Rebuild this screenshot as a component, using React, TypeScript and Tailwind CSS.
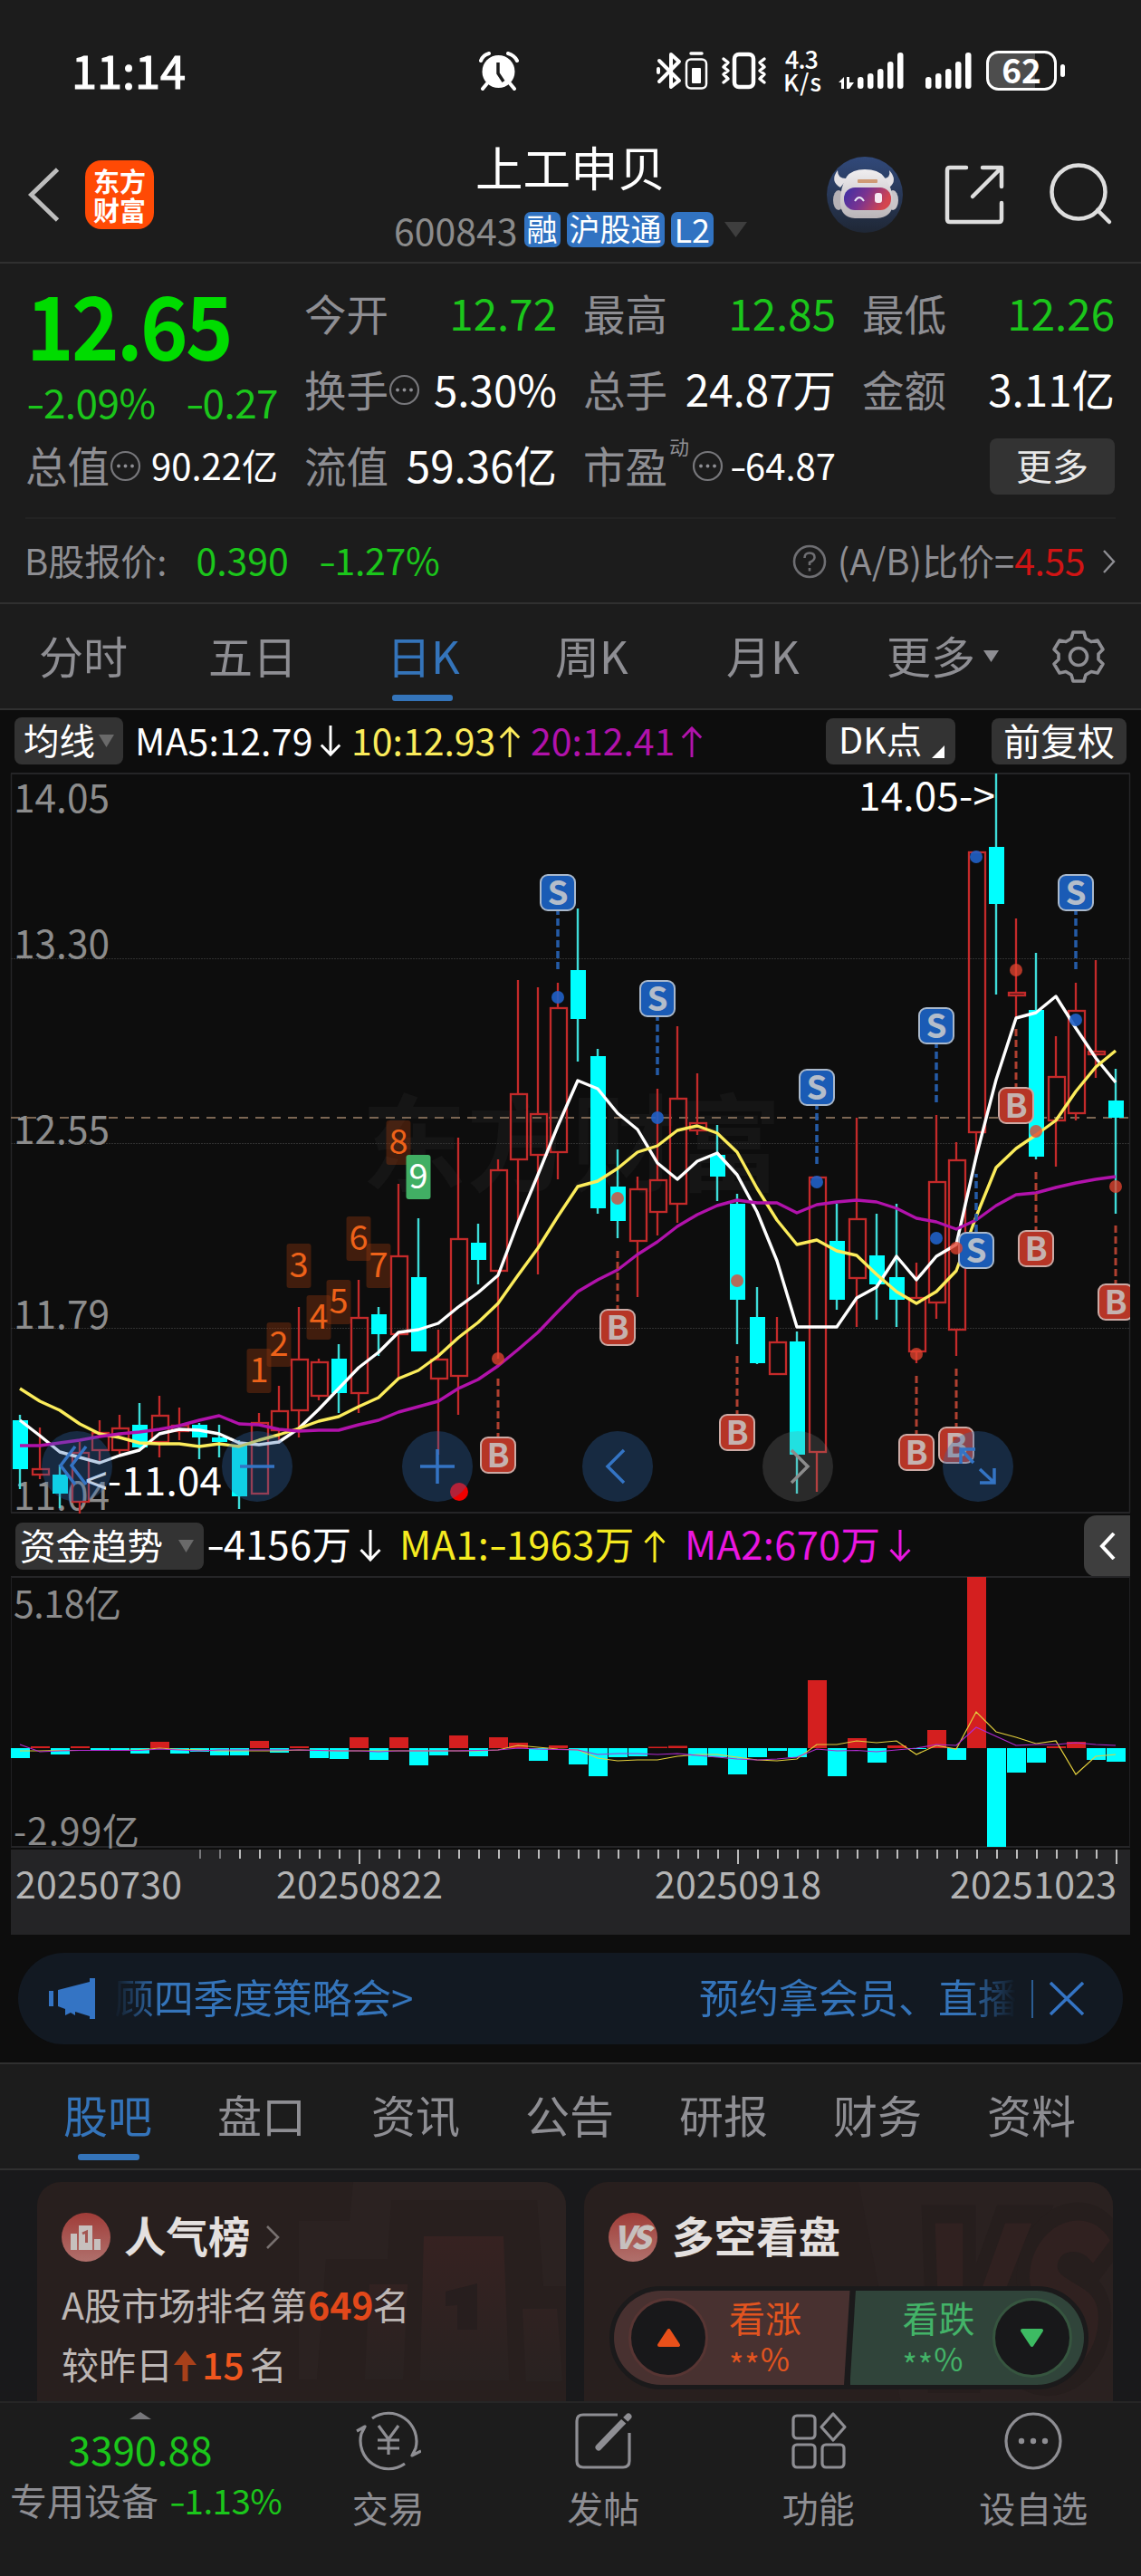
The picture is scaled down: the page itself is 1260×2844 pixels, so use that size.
import React from 'react';

type Candle = [kind: 'u' | 'd', high: number, top: number, bottom: number, low: number];

const X0 = 22;
const STEP = 22;
const cx = (i: number) => X0 + STEP * i;

const candles: Candle[] = [
  ['d', 1562, 1568, 1622, 1644], ['u', 1576, 1621, 1628, 1633], ['d', 1617, 1628, 1649, 1665], ['u', 1592, 1603, 1658, 1671],
  ['u', 1568, 1581, 1601, 1615], ['u', 1562, 1576, 1601, 1605], ['d', 1549, 1573, 1598, 1599], ['u', 1541, 1562, 1592, 1609],
  ['u', 1554, 1573, 1580, 1590], ['d', 1571, 1573, 1587, 1611], ['d', 1573, 1587, 1592, 1609], ['d', 1590, 1595, 1652, 1666],
  ['u', 1560, 1570, 1649, 1649], ['u', 1530, 1557, 1579, 1594], ['u', 1443, 1500, 1557, 1587], ['u', 1500, 1503, 1541, 1546],
  ['d', 1484, 1500, 1538, 1560], ['u', 1413, 1454, 1538, 1560], ['d', 1443, 1451, 1473, 1497], ['u', 1307, 1386, 1473, 1522],
  ['d', 1345, 1410, 1492, 1492], ['u', 1468, 1500, 1522, 1606], ['u', 1256, 1367, 1519, 1562], ['d', 1351, 1372, 1391, 1418],
  ['u', 1280, 1291, 1403, 1500], ['u', 1082, 1207, 1280, 1348], ['u', 1090, 1229, 1275, 1407], ['u', 1085, 1112, 1272, 1302],
  ['d', 1003, 1071, 1125, 1172], ['d', 1158, 1166, 1334, 1340], ['d', 1269, 1310, 1348, 1367], ['u', 1299, 1312, 1370, 1432],
  ['u', 1202, 1302, 1338, 1364], ['u', 1133, 1212, 1329, 1350], ['u', 1185, 1239, 1248, 1253], ['d', 1242, 1275, 1299, 1326],
  ['d', 1318, 1329, 1435, 1484], ['d', 1421, 1454, 1505, 1506], ['u', 1454, 1481, 1517, 1517], ['d', 1470, 1481, 1606, 1649],
  ['u', 1299, 1299, 1603, 1647], ['d', 1329, 1370, 1435, 1446], ['u', 1234, 1345, 1411, 1465], ['d', 1340, 1386, 1418, 1457],
  ['d', 1329, 1410, 1435, 1465], ['u', 1394, 1432, 1492, 1505], ['u', 1231, 1304, 1438, 1456], ['u', 1261, 1280, 1468, 1497],
  ['u', 940, 940, 1250, 1280], ['d', 854, 935, 998, 1098], ['u', 1014, 1095, 1099, 1123], ['d', 1052, 1115, 1277, 1280],
  ['u', 1144, 1188, 1237, 1288], ['u', 1085, 1115, 1229, 1237], ['u', 1060, 1160, 1164, 1190], ['d', 1180, 1215, 1234, 1340],
];

const ma5 = [1568, 1585, 1603, 1609, 1615, 1607, 1601, 1583, 1578, 1579, 1583, 1593, 1595, 1592, 1577, 1556, 1533, 1510, 1493, 1471, 1468, 1461, 1443, 1427, 1408, 1350, 1297, 1243, 1193, 1202, 1229, 1247, 1284, 1302, 1282, 1273, 1297, 1338, 1392, 1465, 1465, 1465, 1433, 1421, 1387, 1413, 1387, 1374, 1277, 1192, 1124, 1118, 1100, 1135, 1168, 1195];
const ma10 = [1533, 1547, 1557, 1572, 1583, 1587, 1593, 1594, 1594, 1597, 1594, 1597, 1590, 1584, 1577, 1569, 1564, 1553, 1543, 1522, 1513, 1497, 1477, 1460, 1439, 1408, 1378, 1343, 1310, 1304, 1290, 1272, 1265, 1248, 1243, 1251, 1272, 1312, 1347, 1374, 1369, 1381, 1386, 1407, 1426, 1439, 1426, 1403, 1343, 1289, 1268, 1253, 1237, 1205, 1178, 1160];
const ma20 = [1596, 1596, 1593, 1590, 1586, 1583, 1581, 1578, 1574, 1568, 1563, 1572, 1573, 1578, 1580, 1579, 1579, 1573, 1568, 1559, 1553, 1547, 1533, 1523, 1508, 1490, 1471, 1448, 1426, 1413, 1402, 1385, 1371, 1354, 1341, 1331, 1325, 1328, 1328, 1339, 1330, 1327, 1325, 1327, 1334, 1345, 1349, 1357, 1347, 1331, 1319, 1317, 1311, 1306, 1302, 1299];

const flow = [11, -2, 7, -2, 2, 2, 6, -7, 6, 4, 8, 8, -8, 5, -2, 11, 12, -12, 13, -12, 19, 8, -14, 9, -12, -6, 14, -3, 18, 31, 10, 9, -1.5, -2.5, 19, 10, 29, 10, 3, 10, -75, 31, -11, 16, -3, 1, -20, 13, -189, 109, 27, 16, -2, -7, 13, 15];
const flowA = [3, 3, 2.5, 2.5, 2.5, 2.5, 2, 0, 1.5, 2, 3, 3, 3, 3, 2, 2.5, 3, 3, 3, 3, 3, 3, 3, 3, 2, -3, -1, 1, 2, 11, 14, 13, 13, 9, 7, 7, 10, 13, 14, 12, -4, -4, -8, -6, -8, 7, -3, 1, -40, -18, -12, -5, -8, 29, 9, 7];
const flowB = [-4, 4, 3, 2.5, 2.5, 2.5, 2.5, 1, 2, 3, 2, 2, 2, 2, 2, 2.5, 3, 3, 4, 3, 3, 3, 3, 2.5, 2, 0, 1, 1.5, 2, 7, 6, 6, 7, 6, 8, 10, 12, 13, 12, 10, 1, 3, 2.5, 4, 2, 0, -4, -3, -23, -13, -3, -4, -4, -6, -4, -3];

const pts = (ys: number[], base = 0) => ys.map((y, i) => `${cx(i)},${base + y}`).join(' ');

const sells = [
  { i: 27, y: 965, d: [1006, 1070], dot: 1101 },
  { i: 32, y: 1082, d: [1123, 1187], dot: 1234 },
  { i: 40, y: 1180, d: [1221, 1285], dot: 1305 },
  { i: 46, y: 1112, d: [1153, 1217], dot: 1367 },
  { i: 48, y: 1360, d: [1296, 1360], dot: 946 },
  { i: 53, y: 965, d: [1006, 1070], dot: 1126 },
];
const buys = [
  { i: 24, y: 1586, dot: 1500 }, { i: 30, y: 1445, dot: 1323 }, { i: 36, y: 1561, dot: 1414 }, { i: 45, y: 1583, dot: 1495 },
  { i: 47, y: 1575, dot: 1378 }, { i: 50, y: 1200, dot: 1071 }, { i: 51, y: 1358, dot: 1249 }, { i: 55, y: 1417, dot: 1310 },
];
const counts = [1489, 1460, 1373, 1430, 1413, 1343, 1373, 1237, 1275];

/* Number text whose leading minus sign is drawn as a wide dash. */
function Num({ children }: { children: string }) {
  const at = children.indexOf('-');
  if (at < 0) return <>{children}</>;
  return (
    <>
      {children.slice(0, at)}
      <span className="inline-block w-[0.43em] origin-left scale-x-[1.35]">-</span>
      {children.slice(at + 1)}
    </>
  );
}

function Mark({ i, y, label }: { i: number; y: number; label: 'S' | 'B' }) {
  const sell = label === 'S';
  return (
    <g>
      <rect x={cx(i) - 19} y={y + 1} width={38} height={39} rx={8} fill={sell ? '#1a5bb5' : '#b63526'} stroke={sell ? '#a9b8cb' : '#cbaaa5'} strokeWidth={2} />
      <text x={cx(i)} y={y + 34} textAnchor="middle" fontSize={37} fontWeight={700} fill={sell ? '#b4bdca' : '#c5b2af'}>{label}</text>
    </g>
  );
}

function CandleChart() {
  return (
    <svg className="block h-[825px] w-full" viewBox="0 850 1260 825" fontFamily='"Noto Sans CJK SC", sans-serif'>
      <clipPath id="plot"><rect x={12} y={850} width={1236} height={825} /></clipPath>
      <text x={399} y={1306} fontSize={116} fontWeight={700} fill="#151515">东方财富</text>
      <g fill="none" stroke="#252527" strokeWidth={2}>
        <path d="M12 854H1248M12 1670H1248" />
        <path d="M12.5 854V1670M1247.5 854V1670" strokeWidth={1.5} />
        <path d="M12 1058.5H1248M12 1262.5H1248M12 1466.5H1248" stroke="#303030" strokeWidth={1} strokeDasharray="2 1" />
      </g>
      <path d="M12 1234H1248" stroke="#7b6653" strokeWidth={2} strokeDasharray="10 8" />
      <g fontSize={44} fill="#8c8c8c">
        <text x={15} y={897} textLength={106} lengthAdjust="spacingAndGlyphs">14.05</text>
        <text x={15} y={1058} textLength={106} lengthAdjust="spacingAndGlyphs">13.30</text>
        <text x={15} y={1263} textLength={106} lengthAdjust="spacingAndGlyphs">12.55</text>
        <text x={15} y={1467} textLength={106} lengthAdjust="spacingAndGlyphs">11.79</text>
        <text x={15} y={1667} textLength={106} lengthAdjust="spacingAndGlyphs">11.04</text>
      </g>
      <g clipPath="url(#plot)">
        {counts.map((y, n) => {
          const last = n === 8;
          return (
            <g key={n}>
              <rect x={cx(12 + n) - 13.5} y={y} width={27} height={49} rx={3} fill={last ? '#41af64' : 'rgba(150,56,14,0.38)'} />
              <text x={cx(12 + n)} y={y + 37} textAnchor="middle" fontSize={38} fill={last ? '#fff' : '#ee6219'}>{n + 1}</text>
            </g>
          );
        })}
        {candles.map(([k, h, t, b, l], i) =>
          k === 'd' ? (
            <g key={i}>
              <path d={`M${cx(i)} ${h}V${l}`} stroke="#3edcd8" strokeWidth={2.4} />
              <rect x={cx(i) - 8} y={t} width={17} height={b - t} fill="#00ffff" />
            </g>
          ) : (
            <g key={i} fill="none" stroke="#c42a2a" strokeWidth={2.3}>
              <path d={`M${cx(i)} ${h}V${t}M${cx(i)} ${b}V${l}`} />
              <rect x={cx(i) - 8} y={t + 1} width={18} height={Math.max(b - t - 1, 2)} />
            </g>
          ),
        )}
        <g fill="none" strokeWidth={3.4} strokeLinejoin="round">
          <polyline points={pts(ma5)} stroke="#ffffff" />
          <polyline points={pts(ma10)} stroke="#fbec5b" />
          <polyline points={pts(ma20)} stroke="#b112ab" />
        </g>
        {sells.map((s) => (
          <g key={s.i}>
            <path d={`M${cx(s.i)} ${s.d[0]}V${s.d[1]}`} stroke="#255ba6" strokeWidth={3.5} strokeDasharray="8 4" strokeDashoffset={4} />
            <circle cx={cx(s.i)} cy={s.dot} r={7} fill="#2060c8" fillOpacity={0.9} />
            <Mark i={s.i} y={s.y} label="S" />
          </g>
        ))}
        {buys.map((s) => (
          <g key={s.i}>
            <path d={`M${cx(s.i)} ${s.y - 64}V${s.y}`} stroke="#b04030" strokeWidth={3} strokeDasharray="8 4" />
            <circle cx={cx(s.i)} cy={s.dot} r={7} fill="#e24430" fillOpacity={0.78} />
            <Mark i={s.i} y={s.y} label="B" />
          </g>
        ))}
        <circle cx={507} cy={1647} r={10} fill="#f00000" />
      </g>
      <g fontSize={44} fill="#fff">
        <text x={948} y={895} textLength={151}>14.05-&gt;</text>
        <text x={94} y={1651} textLength={151}>&lt;-11.04</text>
      </g>
    </svg>
  );
}

const toolIcons = [
  'M37 17L21 38L37 59M49 17L33 38L49 59',
  'M20 39H58',
  'M20 39H58M39 20V58',
  'M46 21L28 39L46 57',
  'M32 21L50 39L32 57',
  'M20 36V20H36M21 21L34 35M41 42L57 57M57 41V57H41',
];

function FlowChart() {
  return (
    <svg className="block h-[398px] w-full" viewBox="0 1738 1260 398" fontFamily='"Noto Sans CJK SC", sans-serif'>
      <path d="M12 1741H1248M12 2039H1248" stroke="#252527" strokeWidth={2} />
      <path d="M12.5 1741V2039M1247.5 1741V2039" stroke="#202022" />
      <text x={15} y={1786} fontSize={41} fill="#8a8a8a" textLength={119}>5.18亿</text>
      <text x={15} y={2037} fontSize={41} fill="#8a8a8a" textLength={139}>-2.99亿</text>
      {flow.map((v, i) => (
        <rect key={i} x={cx(i) - 10} y={v < 0 ? 1930 + v : 1930} width={21} height={Math.abs(v)} fill={v < 0 ? '#d41f1f' : '#00ffff'} />
      ))}
      <polyline points={pts(flowA, 1930)} fill="none" stroke="#e3cf3c" strokeWidth={1.2} />
      <polyline points={pts(flowB, 1930)} fill="none" stroke="#b02bd0" strokeWidth={1.2} />
      <rect x={12} y={2042} width={1236} height={94} fill="#242426" />
      {candles.map((_, i) =>
        i < 9 ? null : (
          <path key={i} d={`M${cx(i) + 1} 2042V${i === 17 || i === 36 || i === 55 ? 2058 : 2052}`} stroke={i < 11 ? '#77777a' : '#bcbcbc'} strokeWidth={2} />
        ),
      )}
      <g fontSize={41} fill="#b4b4b4">
        <text x={17} y={2096} textLength={184}>20250730</text>
        <text x={305} y={2096} textLength={184}>20250822</text>
        <text x={723} y={2096} textLength={184}>20250918</text>
        <text x={1049} y={2096} textLength={184}>20251023</text>
      </g>
    </svg>
  );
}

function StatusBar() {
  const bars = [85, 81, 76, 68, 58];
  return (
    <div className="flex h-[150px] items-start text-white">
      <div className="ml-[79px] mt-[40px] w-[445px] text-[50.5px] leading-[72px] [-webkit-text-stroke:1.2px_#fff]">11:14</div>
      <svg className="mt-[56px] h-[44px] w-[52px]" viewBox="524 56 52 44">
        <circle cx={550.5} cy={79} r={18} fill="#fff" />
        <path d="M531 67Q533 61 540 59M561 59Q568 61 571 67M538 92L533 98M563 92L568 98" stroke="#fff" strokeWidth={4} fill="none" strokeLinecap="round" />
        <path d="M550 69V81L556 90" stroke="#1c1c1c" strokeWidth={3.5} fill="none" />
      </svg>
      <svg className="ml-[144px] mt-[50px] h-[60px] w-[460px]" viewBox="720 50 460 60" fill="none" stroke="#fff" fontFamily='"Noto Sans CJK SC", sans-serif'>
        <path d="M728 67L750 89L741 96V60L750 68L728 90M727 76V80" strokeWidth={4} strokeLinejoin="round" strokeLinecap="round" />
        <path d="M763 59H775" strokeWidth={3.5} strokeLinecap="round" />
        <rect x={758} y={65.5} width={22} height={32} rx={5} strokeWidth={2.5} />
        <rect x={764} y={75} width={10} height={17} rx={1} fill="#fff" stroke="none" />
        <rect x={811} y={60} width={21} height={36} rx={5} strokeWidth={4.5} />
        <path d="M799 65L804 69L799 74L804 78L799 82L804 87L799 91M844 65L839 69L844 74L839 78L844 82L839 87L844 91" strokeWidth={3.5} strokeLinejoin="round" strokeLinecap="round" />
        <g fill="#fff" stroke="none">
          <text x={867} y={76} fontSize={27} fontWeight={500} textLength={37}>4.3</text>
          <text x={865} y={101} fontSize={26} fontWeight={500} textLength={42}>K/s</text>
          <path d="M926 91L932 85V98H929V91ZM935 98V85H938V98ZM938 85V98L943 91H938Z" />
          {bars.map((y, i) => <rect key={i} x={947 + i * 11} y={y} width={6.5} height={98 - y} rx={3} />)}
          {bars.map((y, i) => <rect key={i} x={1022 + i * 11} y={y} width={6.5} height={98 - y} rx={3} />)}
          <path d="M1103 58H1143V98H1103Q1092 98 1092 87V69Q1092 58 1103 58Z" fill="#4d4d4d" />
          <text x={1128} y={92} fontSize={37} fontWeight={700} textAnchor="middle">62</text>
          <rect x={1171} y={71} width={5} height={14} rx={2.5} />
        </g>
        <rect x={1090.5} y={57.5} width={75} height={41} rx={12} strokeWidth={3} />
      </svg>
    </div>
  );
}

function Robot() {
  return (
    <svg className="h-[84px] w-[84px]" viewBox="913 173 84 84">
      <defs>
        <linearGradient id="sky" x1="0" y1="0" x2="0" y2="1"><stop offset="0" stopColor="#31497a" /><stop offset="1" stopColor="#1f2735" /></linearGradient>
        <linearGradient id="visor" x1="0" y1="0" x2="1" y2="0.3"><stop offset="0" stopColor="#3a2fa6" /><stop offset="0.5" stopColor="#7a3390" /><stop offset="1" stopColor="#d4454e" /></linearGradient>
        <linearGradient id="shell" x1="0" y1="0" x2="0" y2="1"><stop offset="0" stopColor="#f0eef0" /><stop offset="1" stopColor="#b9b4b8" /></linearGradient>
      </defs>
      <circle cx={955} cy={215} r={42} fill="url(#sky)" />
      <path d="M925 188Q916 200 928 207L936 197Q925 198 925 188ZM982 188Q992 199 982 207L975 197Q984 197 982 188Z" fill="#e4e1e4" />
      <ellipse cx={926} cy={221} rx={6} ry={11} fill="#b5b1b6" />
      <ellipse cx={986} cy={221} rx={6} ry={11} fill="#c9c5c9" />
      <path d="M935 195Q941 187 955 187Q970 187 976 195Q986 207 986 223Q986 240 968 241H944Q928 240 928 223Q928 206 935 195Z" fill="url(#shell)" />
      <rect x={932} y={207} width={52} height={25} rx={12} fill="url(#visor)" />
      <rect x={947} y={198} width={22} height={4} rx={1} fill="#cf9a75" />
      <path d="M944 222Q949 214 954 222" stroke="#e6e4f4" strokeWidth={2} fill="none" />
      <rect x={966} y={213} width={8} height={11} rx={3} fill="#f5e9f2" />
    </svg>
  );
}

function Header() {
  return (
    <div className="grid h-[141px] grid-cols-[350px_560px_350px] border-b-2 border-[#303030]">
      <div className="flex items-center pb-[10px] pl-[30px]">
        <svg className="h-[62px] w-[38px]" viewBox="0 0 38 64" fill="none" stroke="#bdbdbd" strokeWidth={5}><path d="M34 3L4 32L34 61" /></svg>
        <div className="ml-[26px] flex h-[76px] w-[76px] flex-col items-center justify-center rounded-[18px] bg-[#ff4a05] text-[29px] font-bold leading-[32px] text-white">
          <span>东方</span><span>财富</span>
        </div>
      </div>
      <div className="flex flex-col items-center pt-[3px]">
        <div className="h-[60px] text-[52.5px] leading-[60px] text-white">上工申贝</div>
        <div className="mt-[20px] flex h-[40px] items-center leading-[40px] text-white">
          <span className="text-[41px] leading-[40px] text-[#8b8b8b]">600843</span>
          <span className="ml-[7px] h-[39px] rounded-[7px] bg-[#3173c2] px-[3px] text-[34px] leading-[36px]">融</span>
          <span className="ml-[7px] h-[39px] rounded-[7px] bg-[#3173c2] px-[3px] text-[34px] leading-[36px]">沪股通</span>
          <span className="ml-[7px] h-[39px] rounded-[7px] bg-[#3173c2] px-[4px] text-[36px] leading-[37px]">L2</span>
          <svg className="ml-[12px] h-[17px] w-[25px]" viewBox="0 0 25 17"><path d="M0 0H25L12.5 17Z" fill="#3e3e3e" /></svg>
        </div>
      </div>
      <div className="flex items-center pb-[10px] pl-[3px]">
        <Robot />
        <svg className="ml-[44px] h-[70px] w-[70px]" viewBox="1041 180 70 70" fill="none" stroke="#dedede" strokeWidth={4.5} strokeLinecap="round" strokeLinejoin="round">
          <path d="M1067 185H1049Q1046 185 1046 188V242Q1046 245 1049 245H1103Q1106 245 1106 242V224M1085 185H1106V206M1105 186L1074 217" />
        </svg>
        <svg className="ml-[46px] h-[70px] w-[72px]" viewBox="1157 180 72 70" fill="none" stroke="#dedede" strokeWidth={4.5} strokeLinecap="round">
          <circle cx={1191} cy={212} r={29.5} /><path d="M1212 232L1225 245" />
        </svg>
      </div>
    </div>
  );
}

const Dots = () => (
  <svg className="mt-[3px] h-[35px] w-[35px] shrink-0" viewBox="0 0 35 35"><circle cx={17.5} cy={17.5} r={15.5} fill="none" stroke="#77777b" strokeWidth={2.2} /><g fill="#8e8e93"><circle cx={10} cy={17.5} r={1.9} /><circle cx={17.5} cy={17.5} r={1.9} /><circle cx={25} cy={17.5} r={1.9} /></g></svg>
);

function Cell({ label, value, green, small, children }: { label: string; value: string; green?: boolean; small?: boolean; children?: React.ReactNode }) {
  return (
    <div className="flex h-[84px] items-center justify-between whitespace-nowrap">
      <span className="ml-[-1px] flex items-center text-[46.5px] leading-[66px] text-[#8e8e93]">{label}{children}</span>
      <span className={(small ? 'text-[40px] ' : 'text-[47.5px] ') + (green ? 'text-[#1bc61b]' : 'text-white')}><Num>{value}</Num></span>
    </div>
  );
}

function Quote() {
  return (
    <div className="h-[376px] border-b-2 border-[#303030]">
      <div className="grid grid-cols-4 gap-x-[30px] px-[29px] pt-[12px]">
        <div className="row-span-2 h-[168px] whitespace-nowrap">
          <div className="h-[102px] w-[270px] origin-left scale-x-[0.92] pt-[4px] text-[97px] font-bold leading-[98px] tracking-[-3px] text-[#00dc00]">12.65</div>
          <div className="flex h-[76px] items-center justify-between text-[44px] tracking-[-0.5px] text-[#1bc61b]"><span><Num>-2.09%</Num></span><span><Num>-0.27</Num></span></div>
        </div>
        <Cell label="今开" value="12.72" green />
        <Cell label="最高" value="12.85" green />
        <Cell label="最低" value="12.26" green />
        <Cell label="换手" value="5.30%"><Dots /></Cell>
        <Cell label="总手" value="24.87万" />
        <Cell label="金额" value="3.11亿" />
        <Cell label="总值" value="90.22亿" small><Dots /></Cell>
        <Cell label="流值" value="59.36亿" />
        <Cell label="市盈" value="-64.87" small><span className="ml-[2px] mb-[42px] text-[22px] leading-[22px]">动</span><span className="ml-[3px] flex"><Dots /></span></Cell>
        <div className="flex h-[84px] items-center justify-end pt-[4px]">
          <button className="h-[62px] w-[138px] rounded-[8px] bg-[#333333] pb-[4px] text-[40px] leading-[58px] text-[#e8e8e8]">更多</button>
        </div>
      </div>
      <div className="mx-[28px] mt-[16px] border-t-2 border-[#232323]" />
      <div className="flex h-[90px] items-center whitespace-nowrap pl-[27px] pr-[28px] text-[40px] text-[#8e8e93]">
        <span>B股报价:</span>
        <span className="ml-[32px] text-[41px] text-[#1bc61b]">0.390</span>
        <span className="ml-[33px] text-[41px] tracking-[-0.3px] text-[#1bc61b]"><Num>-1.27%</Num></span>
        <svg className="ml-auto mt-[4px] h-[38px] w-[38px]" viewBox="0 0 38 38" fill="none" stroke="#6e6e72" strokeWidth={2.6}><circle cx={19} cy={19} r={17} /><path d="M13.5 15Q13.500 9.500 19 9.500Q24.500 9.500 24.500 14.500Q24.500 17.500 19 20V23M19 26V29.500" /></svg>
        <span className="ml-[12px]">(A/B)比价=</span>
        <span className="text-[41px] tracking-[-0.5px] text-[#d01414]">4.55</span>
        <svg className="ml-[20px] mt-[3px] h-[26px] w-[14px]" viewBox="0 0 14 26" fill="none" stroke="#8e8e93" strokeWidth={2.4}><path d="M1 1L12 13L1 25" /></svg>
      </div>
    </div>
  );
}

function PeriodTabs() {
  return (
    <div className="flex h-[117px] items-start whitespace-nowrap border-b-2 border-[#303030] pt-[21px] text-[49px] leading-[70px] text-[#8e8e93]">
      <span className="ml-[43px] w-[187px]">分时</span>
      <span className="w-[197px]">五日</span>
      <span className="relative w-[186px] text-[#3474ba]">日K<i className="absolute left-[6px] top-[79px] h-[7px] w-[67px] rounded-[3px] bg-[#3474ba]" /></span>
      <span className="w-[189px]">周K</span>
      <span className="w-[177px]">月K</span>
      <span>更多</span>
      <svg className="ml-[9px] mt-[30px] h-[13px] w-[17px]" viewBox="0 0 17 13"><path d="M0 0H17L8.500 13Z" fill="#8e8e93" /></svg>
      <svg className="ml-[57px] mt-[6px] h-[62px] w-[62px]" viewBox="-31 -31 62 62" fill="none" stroke="#8e8e93" strokeWidth={3.6} strokeLinejoin="round">
        <circle r={9.500} />
        <path d="M-6 -27H6L8 -20L14 -16.500L21 -18L27 -8L22 -3V3L27 8L21 18L14 16.500L8 20L6 27H-6L-8 20L-14 16.500L-21 18L-27 8L-22 3V-3L-27 -8L-21 -18L-14 -16.500L-8 -20Z" />
      </svg>
    </div>
  );
}

function Arrow({ up, className }: { up?: boolean; className: string }) {
  return (
    <svg className={'shrink-0 ' + className} viewBox="0 0 24 36" fill="none" stroke="currentColor" strokeWidth={3}>
      <path d={up ? 'M12 36V3M1.500 14L12 3L22.500 14' : 'M12 0V33M1.500 22L12 33L22.500 22'} />
    </svg>
  );
}

function Charts() {
  return (
    <div className="bg-[#0d0d0d]">
      <div className="flex h-[66px] items-center whitespace-nowrap pt-[2px] text-[41px] leading-[52px] text-white">
        <span className="ml-[16px] flex h-[52px] w-[120px] items-center rounded-[8px] bg-[#333333] pl-[10px] text-[39.500px] leading-[48px]"><span className="pb-[4px]">均线</span><svg className="ml-[4px] h-[14px] w-[17px]" viewBox="0 0 17 14"><path d="M0 0H17L8.500 14Z" fill="#6a6a6a" /></svg></span>
        <span className="ml-[13px] mb-[5px] w-[204px] tracking-[0.2px]">MA5:12.79</span>
        <Arrow className="h-[35px] w-[24px]" />
        <span className="ml-[11px] mb-[5px] w-[163px] text-[#fbec5b]">10:12.93</span>
        <Arrow up className="h-[35px] w-[24px] text-[#fbec5b]" />
        <span className="ml-[11px] mb-[5px] w-[166px] text-[#b112ab]">20:12.41</span>
        <Arrow up className="h-[35px] w-[24px] text-[#b112ab]" />
        <span className="ml-auto flex h-[51px] w-[143px] items-end rounded-[8px] bg-[#333333] pl-[14px] text-[39.500px]"><span className="pb-[3px]">DK点</span><svg className="mb-[7px] ml-[11px] h-[14px] w-[14px]" viewBox="0 0 14 14"><path d="M14 0V14H0Z" fill="#fff" /></svg></span>
        <span className="ml-[40px] mr-[16px] h-[51px] w-[149px] rounded-[8px] bg-[#333333] text-center text-[41px] leading-[47px]">前复权</span>
      </div>
      <div className="relative">
        <CandleChart />
        <div className="absolute left-[46px] top-[730px] flex gap-[121px]">
          {toolIcons.map((d, i) => (
            <button key={i} className={'h-[78px] w-[78px] rounded-full ' + (i === 4 ? 'bg-[rgba(130,130,130,0.25)]' : 'bg-[rgba(47,106,178,0.32)]')}>
              <svg className="h-[78px] w-[78px]" viewBox="0 0 78 78" fill="none" stroke={i === 4 ? '#8c8c8c' : '#3474c4'} strokeWidth={3.500}><path d={d} /></svg>
            </button>
          ))}
        </div>
      </div>
      <div className="flex h-[63px] items-center whitespace-nowrap text-[43.500px] leading-[52px] tracking-[0.300px] text-white">
        <span className="ml-[17px] flex h-[52px] w-[208px] items-center rounded-[8px] bg-[#333333] pl-[5px] text-[39.500px] leading-[48px] tracking-normal"><span className="pb-[4px]">资金趋势</span><svg className="ml-[17px] h-[14px] w-[17px]" viewBox="0 0 17 14"><path d="M0 0H17L8.500 14Z" fill="#6a6a6a" /></svg></span>
        <span className="ml-[3px] mb-[6px] w-[169px]"><Num>-4156万</Num></span>
        <Arrow className="h-[38px] w-[24px]" />
        <span className="ml-[20px] mb-[6px] w-[270px] text-[#f5ea20]"><Num>MA1:-1963万</Num></span>
        <Arrow up className="h-[38px] w-[24px] text-[#f5ea20]" />
        <span className="ml-[21px] mb-[6px] w-[226px] text-[#ea16e0]">MA2:670万</span>
        <Arrow className="h-[38px] w-[24px] text-[#ea16e0]" />
        <span className="ml-auto mr-[12px] flex h-[68px] w-[51px] shrink-0 items-center justify-center rounded-l-[14px] bg-[#3e3e3e]">
          <svg className="h-[30px] w-[18px]" viewBox="0 0 18 30" fill="none" stroke="#fff" strokeWidth={4}><path d="M16 1L3 15L16 29" /></svg>
        </span>
      </div>
      <FlowChart />
      <div className="px-[20px] pt-[20px] pb-[20px]">
        <div className="flex h-[101px] items-center rounded-full bg-[#121922] text-[44px] text-[#3474ba]">
          <svg className="ml-[33px] h-[46px] w-[54px]" viewBox="0 0 54 46" fill="#3474c4"><path d="M1 14H6V31H1ZM11 13L46 4V0H52V45H46V42L30 37V41L25 38L19 41V34L11 31Z" /></svg>
          <div className="ml-[19px] flex w-[996px] justify-between overflow-hidden whitespace-nowrap pb-[5px] [mask-image:linear-gradient(90deg,transparent,#000_50px,#000_940px,transparent)]">
            <span className="tracking-[-0.300px]">顾四季度策略会&gt;</span><span className="mr-[-2px]">预约拿会员、直播</span>
          </div>
          <i className="ml-[17px] h-[42px] w-[2px] bg-[#2b5c92]" />
          <svg className="ml-[18px] h-[37px] w-[38px]" viewBox="0 0 38 37" stroke="#3474c4" strokeWidth={3.500}><path d="M1 1L37 36M37 1L1 36" /></svg>
        </div>
      </div>
    </div>
  );
}

const sections = ['股吧', '盘口', '资讯', '公告', '研报', '财务', '资料'];

function SectionTabs() {
  return (
    <div className="flex h-[119px] items-start border-y-2 border-[#303030] bg-[#1c1c1c] pl-[34px] pr-[36px] pt-[20px] text-[49px] leading-[70px]">
      {sections.map((s, i) => (
        <span key={s} className={'relative w-[170px] text-center ' + (i === 0 ? 'text-[#3474ba]' : 'text-[#8e8e93]')}>
          {s}
          {i === 0 && <i className="absolute left-[52px] top-[79px] h-[7px] w-[68px] rounded-[3px] bg-[#3474ba]" />}
        </span>
      ))}
    </div>
  );
}

const Stars = () => (
  <span className="h-[42px] text-[35px] leading-[38px]"><span className="relative top-[7px] tracking-[1px]">**</span>%</span>
);

function Cards() {
  return (
    <div className="flex h-[255px] gap-[20px] overflow-hidden bg-[#19191b] px-[41px] pt-[13px]">
      <div className="relative h-[300px] w-[584px] shrink-0 overflow-hidden rounded-[26px] bg-[#281f1e] text-[41px] text-[#bdb7b5]">
        <svg className="absolute left-0 top-0 h-[300px] w-[584px]" viewBox="41 2409 584 300">
          <defs><linearGradient id="tower" x1="0" y1="0" x2="0" y2="1"><stop offset="0" stopColor="#362221" /><stop offset="1" stopColor="#292221" /></linearGradient></defs>
          <path d="M390 2409H625V2524H600L593 2429H432L428 2494H360L350 2627H330V2452H386Z" fill="#2b2221" />
          <path d="M468 2469H556L562 2628H464Z M408 2522H450L445 2627H403Z M577 2549H615L621 2629H581Z" fill="url(#tower)" />
          <path d="M492 2530L527 2521V2572H505V2545L492 2546Z" fill="#271e1e" />
        </svg>
        <div className="relative pl-[27px] pt-[29px]">
          <div className="flex h-[64px] items-center">
            <svg className="h-[54px] w-[54px]" viewBox="0 0 54 54">
              <defs><linearGradient id="disc" x1="0" y1="0" x2="0" y2="1"><stop offset="0" stopColor="#a03c38" /><stop offset="1" stopColor="#b0706c" /></linearGradient></defs>
              <circle cx={27} cy={27} r={27} fill="url(#disc)" />
              <path d="M10 23H17V41H10ZM19 14H34V41H19ZM36 29H43V41H36Z" fill="#c6c0be" />
              <path d="M23 23L27.500 21V33" stroke="#a35551" strokeWidth={3} fill="none" />
            </svg>
            <span className="ml-[15px] pb-[7px] text-[46.500px] font-bold leading-[60px] text-[#e4e0df]">人气榜</span>
            <svg className="ml-[16px] h-[26px] w-[16px]" viewBox="0 0 16 26" fill="none" stroke="#77706f" strokeWidth={2.600}><path d="M2 1L14 13L2 25" /></svg>
          </div>
          <div className="mt-[8px] flex h-[66px] leading-[66px]">A股市场排名第<b className="ml-[1px] mr-[-1px] text-[#e2481a]">649</b>名</div>
          <div className="flex h-[66px] items-center leading-[66px]">较昨日<svg className="ml-[1px] mr-[6px] mt-[6px] h-[34px] w-[25px]" viewBox="0 0 25 34"><path d="M12.500 0L25 16H15.500V34H9.500V16H0Z" fill="#a8401a" /></svg><b className="font-medium text-[#f0561e]">15</b><span className="ml-[6px]">名</span></div>
        </div>
      </div>
      <div className="relative h-[300px] w-[584px] shrink-0 overflow-hidden rounded-[26px] bg-[#281f1e]">
        <svg className="absolute left-0 top-0 h-[300px] w-[584px]" viewBox="645 2409 584 300" fontFamily='"Noto Sans CJK SC", sans-serif'>
          <path d="M948 2409H1229V2680H1000Z" fill="#2a2120" />
          <text x={1004} y={2622} fontSize={225} fontWeight={900} fontStyle="italic" fill="#302120" stroke="#261e1d" strokeWidth={40} paintOrder="stroke" textLength={205} lengthAdjust="spacingAndGlyphs">VS</text>
        </svg>
        <div className="relative pl-[27px] pt-[29px]">
          <div className="flex h-[64px] items-center">
            <span className="flex h-[54px] w-[54px] items-center justify-center rounded-full bg-linear-to-b from-[#a03c38] to-[#b0706c] pb-[3px] pr-[4px] text-[35px] font-black italic tracking-[-3px] text-[#c6c0be]">VS</span>
            <span className="ml-[16px] pb-[7px] text-[46.500px] font-bold leading-[60px] text-[#e4e0df]">多空看盘</span>
          </div>
        </div>
        <div className="relative ml-[28px] mt-[22px] flex h-[114px] w-[529px] items-center rounded-full border-[5px] border-[#1b1a1b] bg-[#1b1a1b] text-[40px] leading-[44px]">
          <div className="flex h-[104px] w-[261px] items-center rounded-l-full bg-[#483130] text-[#e2541f] [clip-path:polygon(0_0,100%_0,97.500%_100%,0_100%)]">
            <span className="ml-[16px] flex h-[88px] w-[88px] items-center justify-center rounded-full border-[3px] border-[#573533] bg-[#18181a]"><svg className="h-[22px] w-[27px]" viewBox="0 0 27 22"><path d="M13.500 3L24 19H3Z" fill="#e9501a" stroke="#e9501a" strokeWidth={4} strokeLinejoin="round" /></svg></span>
            <span className="ml-[23px] flex flex-col"><span className="h-[48px]">看涨</span><Stars /></span>
          </div>
          <div className="flex h-[104px] w-[259px] items-center rounded-r-full bg-[#30443a] text-[#43b368] [clip-path:polygon(2.500%_0,100%_0,100%_100%,0_100%)]">
            <span className="ml-[58px] flex w-[99px] flex-col"><span className="h-[48px]">看跌</span><Stars /></span>
            <span className="flex h-[88px] w-[88px] items-center justify-center rounded-full border-[3px] border-[#36553f] bg-[#18181a]"><svg className="h-[22px] w-[27px]" viewBox="0 0 27 22"><path d="M13.500 19L24 3H3Z" fill="#3dbb63" stroke="#3dbb63" strokeWidth={4} strokeLinejoin="round" /></svg></span>
          </div>
        </div>
      </div>
    </div>
  );
}

const actions = [
  { label: '交易', icon: <><path d="M18 10A31 31 0 0 1 66 43L62 51L72 46M54 60A31 31 0 0 1 6 27L10 19L1 24" strokeLinejoin="round" /><path d="M25 18L36 33L47 18M36 33V50M24 34H48M24 43H48" /></> },
  { label: '发帖', icon: <><path d="M52 6H14Q7 6 7 13V57Q7 64 14 64H58Q65 64 65 57V26" /><path d="M64 8L55 17L31 42" strokeWidth={7} strokeLinecap="round" /><path d="M55 8L65 17" stroke="#1c1c1c" strokeWidth={3} /></> },
  { label: '功能', icon: <><rect x={8} y={7} width={24} height={25} rx={4} /><rect x={8} y={39} width={24} height={25} rx={4} /><rect x={40} y={39} width={24} height={25} rx={4} /><path d="M52 5L65 19.500L52 34L39 19.500Z" strokeLinejoin="round" /></> },
  { label: '设自选', icon: <><circle cx={36} cy={35} r={30} /><g fill="#8e8e93" stroke="none"><circle cx={23} cy={35} r={3.200} /><circle cx={36} cy={35} r={3.200} /><circle cx={49} cy={35} r={3.200} /></g></> },
];

function BottomBar() {
  return (
    <div className="grid h-[194px] grid-cols-[310px_repeat(4,1fr)] border-t-2 border-[#262626] bg-[#1c1c1c] text-[40px] text-[#8e8e93]">
      <div className="flex flex-col items-center whitespace-nowrap pt-[10px]">
        <svg className="h-[8px] w-[24px]" viewBox="0 0 24 8"><path d="M0 8L12 0L24 8Z" fill="#77777b" /></svg>
        <div className="mt-[5px] h-[54px] text-[44px] leading-[54px] text-[#1bc61b]">3390.88</div>
        <div className="flex h-[58px] w-full items-center pl-[11px] text-[41px] leading-[58px]">专用设备<span className="ml-[12px] text-[38.500px] tracking-[-0.500px] text-[#1bc61b]"><Num>-1.13%</Num></span></div>
      </div>
      {actions.map((a) => (
        <div key={a.label} className="flex flex-col items-center pt-[7px]">
          <svg className="h-[72px] w-[72px]" viewBox="0 0 72 72" fill="none" stroke="#8e8e93" strokeWidth={3.200}>{a.icon}</svg>
          <span className="mt-[7px] leading-[58px]">{a.label}</span>
        </div>
      ))}
    </div>
  );
}

export default function App() {
  return (
    <div className="h-[2844px] w-[1260px] overflow-hidden bg-[#1c1c1c] font-['Noto_Sans_CJK_SC',sans-serif]">
      <StatusBar />
      <Header />
      <Quote />
      <PeriodTabs />
      <Charts />
      <SectionTabs />
      <Cards />
      <BottomBar />
    </div>
  );
}
